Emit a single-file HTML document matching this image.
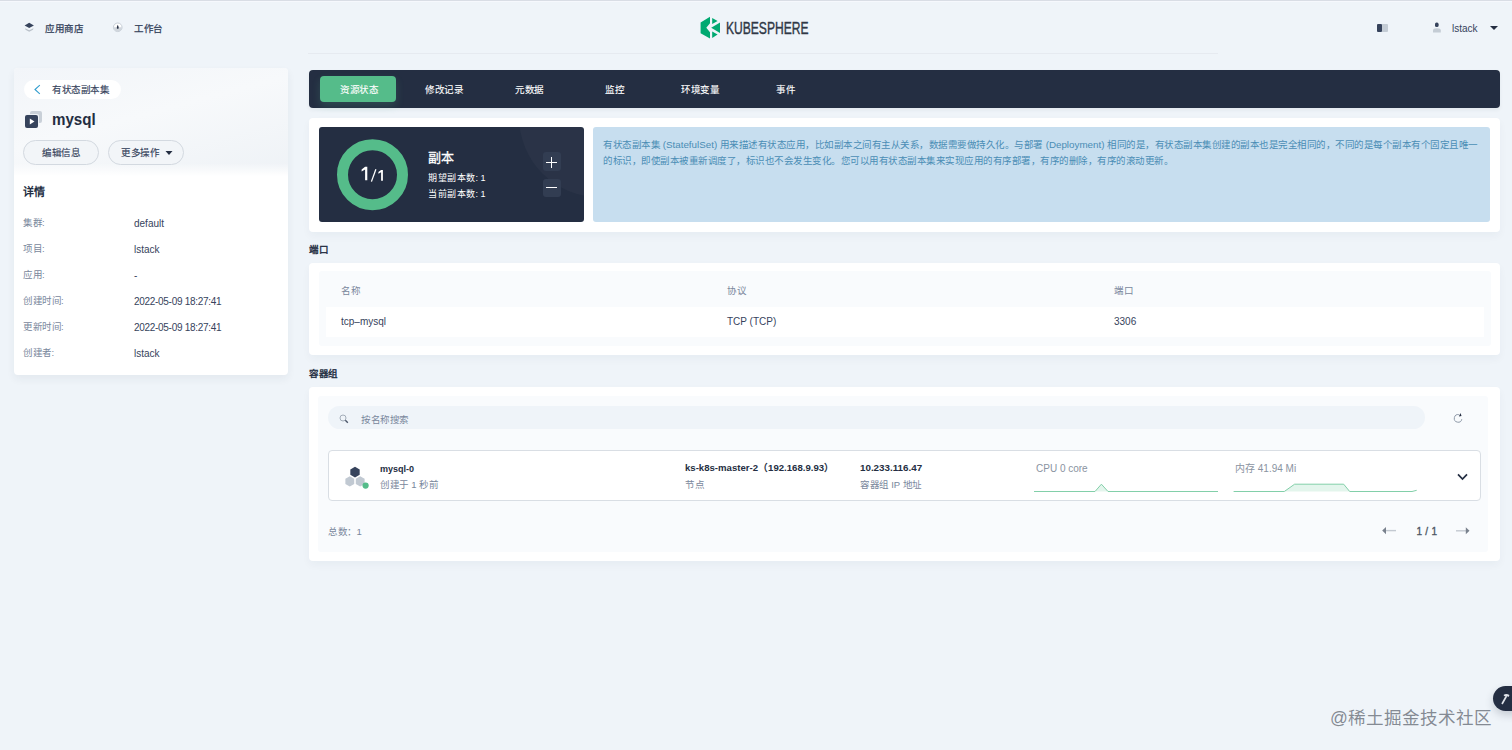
<!DOCTYPE html>
<html lang="zh-CN"><head><meta charset="utf-8">
<style>
*{box-sizing:border-box;margin:0;padding:0}
html,body{width:1512px;height:750px;overflow:hidden}
body{background:#eff4f9;font-family:"Liberation Sans",sans-serif;color:#242e42;font-size:10px;position:relative}
.abs{position:absolute}
.t{position:absolute;white-space:nowrap;line-height:1}
#topline{left:0;top:0;width:1512px;height:1px;background:#d9dde5}
#topline2{left:0;top:1px;width:1512px;height:1px;background:#f6f8fd}
#hdrline{left:308px;top:53px;width:910px;height:1px;background:#e6eaf0}
.nav{font-size:9.5px;letter-spacing:-0.5px;color:#36435c;-webkit-text-stroke:0.25px currentColor}
#lcard{left:14px;top:68px;width:274px;height:307px;background:#fff;border-radius:4px;box-shadow:0 4px 8px rgba(36,46,66,0.06)}
#lhead{left:14px;top:68px;width:274px;height:108px;background:linear-gradient(180deg,rgba(255,255,255,0) 88%,#fff 100%),linear-gradient(165deg,#f2f5f9 0%,#f7f9fb 45%,#eef2f6 100%);border-radius:4px 4px 0 0}
.crumb{left:24px;top:80px;width:97px;height:19px;background:#fff;border-radius:10px}
.btn{height:25px;border:1px solid #d3d9e0;border-radius:13px;background:#f2f5f8}
.lab{font-size:9.5px;letter-spacing:-0.5px;color:#79879c}
.val{font-size:10px;color:#36435c}
#tabs{left:309px;top:70px;width:1191px;height:38px;background:#242e42;border-radius:4px;box-shadow:0 2px 4px rgba(36,46,66,0.06)}
#tabact{left:320px;top:76px;width:76px;height:26px;background:#55bc8a;border-radius:4px;box-shadow:0 4px 8px rgba(85,188,138,0.2)}
.tab{font-size:9.5px;letter-spacing:-0.5px;color:#fff;top:85px;-webkit-text-stroke:0.1px currentColor}
.card{background:#fff;border-radius:4px;box-shadow:0 4px 8px rgba(36,46,66,0.04)}
.sec{font-size:9.5px;letter-spacing:-0.5px;color:#242e42;-webkit-text-stroke:0.4px currentColor}
.gray{color:#79879c}
.b{font-weight:bold}
</style></head><body>
<div class="abs" id="topline"></div>
<div class="abs" id="topline2"></div>
<div class="abs" id="hdrline"></div>

<!-- header nav -->
<svg class="abs" style="left:20px;top:18px" width="20" height="18" viewBox="20 18 20 18"><path d="M29.2 22.8 L33.9 25.4 L29.2 28 L24.6 25.4 Z" fill="#36435c"/><path d="M25 28.3 L29.2 30.2 L33.5 28.3 L33 29.8 L29.2 31.7 L25.5 29.8 Z" fill="#b9c1ca"/></svg>
<div class="t nav" id="nav1" style="left:45px;top:24px">应用商店</div>
<svg class="abs" style="left:108px;top:18px" width="20" height="18" viewBox="108 18 20 18"><circle cx="117.75" cy="27.3" r="4.3" fill="#fff" stroke="#c1c9d2" stroke-width="0.9"/><path d="M113.45 27.3 A4.3 4.3 0 0 0 122.05 27.3 Z" fill="#d0d6dd"/><path d="M117.75 24.8 Q118.9 27 118.7 28.3 Q117.75 29.4 116.8 28.3 Q116.6 27 117.75 24.8 Z" fill="#242e42"/></svg>
<div class="t nav" id="nav2" style="left:134px;top:24px">工作台</div>

<!-- logo -->
<svg class="abs" style="left:700px;top:16px" width="22" height="24" viewBox="700 16 22 24">
<path d="M710 16.8 L700.6 22.4 L700.6 33.2 L710 38.6 L710 32.3 L706.3 27.7 L710 23.2 Z" fill="#00a971"/>
<path d="M712.2 18 L717.6 21 L712.2 24 Z" fill="#00a971"/>
<path d="M711.2 27.8 L720 22.6 L720 33 Z" fill="#00a971"/>
<path d="M712.2 31.6 L717.6 34.6 L712.2 38 Z" fill="#00a971"/>
</svg>
<div class="t" id="logo" style="left:726px;top:20px;font-size:17px;color:#303846;transform-origin:0 0;transform:scaleX(0.71);-webkit-text-stroke:0.4px currentColor">KUBESPHERE</div>

<!-- right header -->
<div class="abs" style="left:1377px;top:24px;width:5px;height:8px;background:#36435c;border-radius:1px"></div>
<div class="abs" style="left:1382px;top:24px;width:6px;height:8px;background:#c4ccd5;border-radius:0 1px 1px 0"></div>
<svg class="abs" style="left:1432px;top:22px" width="10" height="11" viewBox="0 0 10 11"><rect x="3" y="0.6" width="3.6" height="4.4" rx="1.6" fill="#36435c"/><path d="M1 10.5 L1 8.5 Q1 6.3 4.8 6.3 Q8.8 6.3 8.8 8.5 L8.8 10.5 Z" fill="#c4ccd5"/></svg>
<div class="t" id="user" style="left:1452px;top:23.5px;font-size:10px;color:#36435c">lstack</div>
<svg class="abs" style="left:1490px;top:26px" width="8" height="4" viewBox="0 0 8 4"><path d="M0 0 L8 0 L4 4 Z" fill="#242e42"/></svg>

<!-- left card -->
<div class="abs" id="lcard"></div>
<div class="abs" id="lhead"></div>
<div class="abs crumb"></div>
<svg class="abs" style="left:34px;top:84px" width="8" height="11" viewBox="0 0 8 11"><path d="M5.8 1.2 L1 5.5 L5.8 9.8" fill="none" stroke="#329dce" stroke-width="1.1"/></svg>
<div class="t" id="crumb" style="left:52px;top:85px;font-size:9.5px;letter-spacing:-0.5px;color:#36435c;-webkit-text-stroke:0.15px currentColor">有状态副本集</div>
<div class="abs" style="left:30px;top:111px;width:12px;height:12px;background:#c9d0d8;border-radius:2px"></div>
<div class="abs" style="left:25px;top:115px;width:13px;height:13px;background:#36435c;border-radius:2px;box-shadow:1px -1px 0 #eef2f6"></div>
<svg class="abs" style="left:29px;top:118px" width="6" height="7" viewBox="0 0 6 7"><path d="M0.8 0.5 L5.5 3.5 L0.8 6.5 Z" fill="#fff"/></svg>
<div class="t" id="title" style="left:52px;top:111px;font-size:17px;font-weight:bold;color:#242e42;transform-origin:0 0;transform:scaleX(0.89)">mysql</div>
<div class="abs btn" style="left:23px;top:140px;width:76px"></div>
<div class="t" id="btn1" style="left:42px;top:148px;font-size:9.5px;letter-spacing:-0.5px;color:#36435c;-webkit-text-stroke:0.15px currentColor">编辑信息</div>
<div class="abs btn" style="left:108px;top:140px;width:76px"></div>
<div class="t" id="btn2" style="left:121px;top:148px;font-size:9.5px;letter-spacing:-0.5px;color:#36435c;-webkit-text-stroke:0.15px currentColor">更多操作</div>
<svg class="abs" style="left:165px;top:151px" width="8" height="4" viewBox="0 0 8 4"><path d="M0.5 0 L7.5 0 L4 4 Z" fill="#242e42"/></svg>
<div class="t" id="det" style="left:23px;top:187px;font-size:11px;font-weight:bold;color:#242e42">详情</div>
<div class="t lab" id="l1" style="left:23px;top:218px">集群:</div><div class="t val" id="v1" style="left:134px;top:218.5px">default</div>
<div class="t lab" style="left:23px;top:244px">项目:</div><div class="t val" style="left:134px;top:244.5px">lstack</div>
<div class="t lab" style="left:23px;top:270px">应用:</div><div class="t val" style="left:134px;top:270.5px">-</div>
<div class="t lab" style="left:23px;top:296px">创建时间:</div><div class="t val" style="left:134px;top:296.5px"><span style="letter-spacing:-0.3px">2022-05-09 18:27:41</span></div>
<div class="t lab" style="left:23px;top:322px">更新时间:</div><div class="t val" style="left:134px;top:322.5px"><span style="letter-spacing:-0.3px">2022-05-09 18:27:41</span></div>
<div class="t lab" style="left:23px;top:348px">创建者:</div><div class="t val" style="left:134px;top:348.5px">lstack</div>

<!-- tabs -->
<div class="abs" id="tabs"></div>
<div class="abs" id="tabact"></div>
<div class="t tab" id="tab1" style="left:340px">资源状态</div>
<div class="t tab" id="tab2" style="left:425px">修改记录</div>
<div class="t tab" id="tab3" style="left:515px">元数据</div>
<div class="t tab" id="tab4" style="left:605px">监控</div>
<div class="t tab" id="tab5" style="left:681px">环境变量</div>
<div class="t tab" id="tab6" style="left:776px">事件</div>

<!-- status card -->
<div class="abs card" style="left:309px;top:118px;width:1191px;height:114px"></div>
<div class="abs" style="left:319px;top:127px;width:265px;height:95px;background:#242e42;border-radius:3px;overflow:hidden"><div class="abs" style="left:200px;top:-90px;width:160px;height:160px;border-radius:50%;background:rgba(255,255,255,0.028)"></div></div>
<svg class="abs" style="left:336px;top:138px" width="74" height="74" viewBox="0 0 74 74"><circle cx="36.5" cy="36.7" r="30" fill="none" stroke="#55bc8a" stroke-width="11"/></svg>
<svg class="abs" style="left:355px;top:160px" width="35" height="28" viewBox="355 160 35 28"><path d="M365.1 166.8 L367.3 166.8 L367.3 180.3 L365.1 180.3 L365.1 169.6 L361.6 171.6 L361.6 169.4 Z" fill="#fff"/><path d="M371.4 181.6 L375.9 169.3" stroke="#fff" stroke-width="1.3" fill="none"/><path d="M381.1 170.1 L382.9 170.1 L382.9 180.7 L381.1 180.7 L381.1 172.3 L378.4 173.8 L378.4 172.1 Z" fill="#fff"/></svg>
<div class="t" id="rep" style="left:428px;top:151px;font-size:13px;color:#fff;-webkit-text-stroke:0.3px currentColor">副本</div>
<div class="t" id="rep1" style="left:428px;top:173.5px;font-size:9px;letter-spacing:0.5px;color:#fff">期望副本数<span style="letter-spacing:0">: 1</span></div>
<div class="t" id="rep2" style="left:428px;top:189.5px;font-size:9px;letter-spacing:0.5px;color:#fff">当前副本数<span style="letter-spacing:0">: 1</span></div>
<div class="abs" style="left:543px;top:152px;width:18px;height:19px;background:#323d52;border-radius:3px"></div>
<div class="abs" style="left:546px;top:161.5px;width:11px;height:1.3px;background:#fff"></div>
<div class="abs" style="left:550.9px;top:157px;width:1.3px;height:11px;background:#fff"></div>
<div class="abs" style="left:543px;top:179px;width:18px;height:18px;background:#323d52;border-radius:3px"></div>
<div class="abs" style="left:546px;top:187px;width:11px;height:1.3px;background:#fff"></div>
<div class="abs" style="left:593px;top:127px;width:897px;height:95px;background:#c7deef;border-radius:3px"></div>
<div class="t" id="info1" style="left:603px;top:140px;font-size:9.5px;letter-spacing:-0.5px;color:#4a8db5">有状态副本集<span style="letter-spacing:0;font-size:9.8px"> (StatefulSet) </span>用来描述有状态应用，比如副本之间有主从关系，数据需要做持久化。与部署<span style="letter-spacing:0;font-size:9.8px"> (Deployment) </span>相同的是，有状态副本集创建的副本也是完全相同的，不同的是每个副本有个固定且唯一</div>
<div class="t" id="info2" style="left:603px;top:156px;font-size:9.5px;letter-spacing:-0.5px;color:#4a8db5">的标识，即使副本被重新调度了，标识也不会发生变化。您可以用有状态副本集来实现应用的有序部署，有序的删除，有序的滚动更新。</div>

<!-- ports -->
<div class="t sec" id="sec1" style="left:309px;top:244.5px">端口</div>
<div class="abs card" style="left:309px;top:263px;width:1191px;height:92px"></div>
<div class="abs" style="left:319px;top:271px;width:1172px;height:75px;background:#f9fbfd;border-radius:3px"></div>
<div class="abs" style="left:326px;top:307px;width:1158px;height:30px;background:#fff"></div>
<div class="t gray" id="th1" style="left:341px;top:286px;font-size:9.5px;letter-spacing:-0.5px">名称</div>
<div class="t gray" id="th2" style="left:727px;top:286px;font-size:9.5px;letter-spacing:-0.5px">协议</div>
<div class="t gray" id="th3" style="left:1114px;top:286px;font-size:9.5px;letter-spacing:-0.5px">端口</div>
<div class="t" id="td1" style="left:341px;top:317px;color:#36435c">tcp–mysql</div>
<div class="t" id="td2" style="left:727px;top:317px;color:#36435c">TCP (TCP)</div>
<div class="t" id="td3" style="left:1114px;top:317px;color:#36435c">3306</div>

<!-- pods -->
<div class="t sec" id="sec2" style="left:309px;top:368.5px">容器组</div>
<div class="abs card" style="left:309px;top:387px;width:1191px;height:174px"></div>
<div class="abs" style="left:318px;top:396px;width:1170px;height:156px;background:#f9fbfd;border-radius:3px"></div>
<div class="abs" style="left:328px;top:406px;width:1097px;height:23px;background:#eff4f9;border-radius:12px"></div>
<svg class="abs" style="left:339px;top:414px" width="10" height="10" viewBox="0 0 10 10"><circle cx="4" cy="4" r="3" fill="none" stroke="#a3adb9" stroke-width="1"/><path d="M6.3 6.3 L8.8 8.8" stroke="#4a5568" stroke-width="1.4"/></svg>
<div class="t gray" id="search" style="left:361px;top:415px;font-size:9.5px;letter-spacing:-0.5px">按名称搜索</div>
<svg class="abs" style="left:1448px;top:406px" width="22" height="22" viewBox="1448 406 22 22"><path d="M1461.82 419.19 A3.8 3.8 0 1 1 1458.89 414.68" fill="none" stroke="#8e99a8" stroke-width="1"/><path d="M1460.5 413.1 L1461.5 416 L1458.9 416.5 Z" fill="#242e42"/></svg>

<div class="abs" style="left:328px;top:450px;width:1153px;height:51px;background:#fff;border:1px solid #d9dee4;border-radius:4px"></div>
<svg class="abs" style="left:340px;top:462px" width="32" height="30" viewBox="340 462 32 30">
<path d="M355.00 466.70 L359.68 469.40 L359.68 474.80 L355.00 477.50 L350.32 474.80 L350.32 469.40 Z" fill="#36435c"/>
<path d="M349.80 476.30 L354.22 478.85 L354.22 483.95 L349.80 486.50 L345.38 483.95 L345.38 478.85 Z" fill="#c1c9d2"/>
<path d="M360.20 476.30 L364.62 478.85 L364.62 483.95 L360.20 486.50 L355.78 483.95 L355.78 478.85 Z" fill="#c1c9d2"/>
<circle cx="365.6" cy="485.6" r="3.1" fill="#55bc8a"/>
</svg>
<div class="t b" id="pod" style="left:380px;top:463.5px;font-size:9.5px;transform-origin:0 0;transform:scaleX(0.95);color:#242e42">mysql-0</div>
<div class="t gray" id="pod2" style="left:380px;top:480px;font-size:9.5px;letter-spacing:-0.5px">创建于<span style="letter-spacing:0"> 1 </span>秒前</div>
<div class="t b" id="node" style="left:685px;top:463px;font-size:9.6px;color:#242e42">ks-k8s-master-2（192.168.9.93）</div>
<div class="t gray" id="node2" style="left:685px;top:480px;font-size:9.5px;letter-spacing:-0.5px">节点</div>
<div class="t b" id="ip" style="left:860px;top:463px;font-size:9.8px;color:#242e42">10.233.116.47</div>
<div class="t gray" id="ip2" style="left:860px;top:480px;font-size:9.5px;letter-spacing:-0.5px">容器组<span style="letter-spacing:0"> IP </span>地址</div>
<div class="t" id="cpu" style="left:1036px;top:464px;color:#8a93a1">CPU 0 core</div>
<div class="t" id="mem" style="left:1235px;top:464px;color:#8a93a1">内存 41.94 Mi</div>
<svg class="abs" style="left:1030px;top:480px" width="400" height="16" viewBox="1030 480 400 16">
<path d="M1095 491.5 L1101.4 484.2 L1108 491.5 Z" fill="#e3f5ec"/>
<path d="M1034 491.5 L1095 491.5 L1101.4 484.2 L1108 491.5 L1218 491.5" fill="none" stroke="#82cfa9" stroke-width="1"/>
<path d="M1284.3 491.5 L1294.6 484.2 L1343.7 484.2 L1349.7 491.5 Z" fill="#e3f5ec"/>
<path d="M1233.6 491.5 L1284.3 491.5 L1294.6 484.2 L1343.7 484.2 L1349.7 491.5 L1412 491.5 L1416.7 490.3" fill="none" stroke="#82cfa9" stroke-width="1"/>
</svg>
<svg class="abs" style="left:1456px;top:472px" width="13" height="10" viewBox="0 0 13 10"><path d="M2 2.3 L6.5 7 L11 2.3" fill="none" stroke="#242e42" stroke-width="1.7"/></svg>
<div class="t gray" id="total" style="left:328px;top:527px;font-size:9.5px;letter-spacing:-0.5px">总数：1</div>
<svg class="abs" style="left:1376px;top:518px" width="100" height="24" viewBox="1376 518 100 24"><path d="M1385.5 530.6 L1396 530.6" stroke="#c3c9d1" stroke-width="1.4"/><path d="M1382.2 530.6 L1386 527 L1386 534.2 Z" fill="#79818d"/><path d="M1456 530.8 L1466.5 530.8" stroke="#c3c9d1" stroke-width="1.4"/><path d="M1469.5 530.8 L1465.8 527.3 L1465.8 534.3 Z" fill="#79818d"/></svg>
<div class="t" id="page" style="left:1416.5px;top:527px;color:#4f5866;word-spacing:0.5px;-webkit-text-stroke:0.35px currentColor">1 / 1</div>


<!-- watermark -->
<div class="t" id="wm" style="left:1330px;top:710px;font-size:17.6px;color:rgba(108,114,124,0.82)">@稀土掘金技术社区</div>
<div class="abs" style="left:1493px;top:686px;width:40px;height:25px;border-radius:13px;background:#242e42;box-shadow:0 4px 8px rgba(36,46,66,0.2)"></div>
<svg class="abs" style="left:1499px;top:692px" width="13" height="13" viewBox="0 0 13 13"><path d="M3 12 L7.5 4" stroke="#e0e4ea" stroke-width="1.6"/><path d="M4.5 3 Q7 1 10.5 3 L9.5 5 Q7.5 3.5 5.5 4.3 Z" fill="#e0e4ea"/></svg>
</body></html>
